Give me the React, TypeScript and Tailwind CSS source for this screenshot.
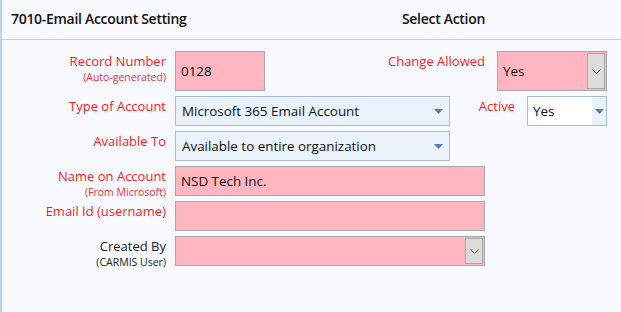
import React from "react";

const font = { fontFamily: '"Open Sans", "Noto Sans", sans-serif' };

const Label: React.FC<{ text: string; sub?: string; red?: boolean }> = ({ text, sub, red = true }) => (
  <div className={`w-[165px] shrink-0 pt-[1px] pr-[1px] text-right ${red ? "text-[#ff1a1a]" : "text-[#222]"}`}>
    <div className="text-[13px] leading-[19px]">{text}</div>
    {sub && (
      <div className={`text-[10.5px] leading-[14px] -mt-[1px] ${red ? "text-[#f0303a]" : "text-[#222]"}`}>{sub}</div>
    )}
  </div>
);

const Caret = () => (
  <svg width="9" height="5" viewBox="0 0 9 5" className="shrink-0">
    <path d="M0 0h9L4.5 5z" fill="#5a7bb0" />
  </svg>
);

const Chevron = () => (
  <svg width="9" height="5" viewBox="0 0 9 5">
    <path d="M0.5 0.5L4.5 4.5L8.5 0.5" fill="none" stroke="#555" strokeWidth="1" />
  </svg>
);

const BlueSelect: React.FC<{ value: string; w: string }> = ({ value, w }) => (
  <div className={`${w} h-[30px] flex items-center justify-between pl-[6px] pr-[6px] bg-[#e9f1fb] border border-[#a7bcd9] text-[13.4px] text-[#111]`}>
    <span>{value}</span>
    <Caret />
  </div>
);

const PinkBox: React.FC<{ value?: string; w: string; h?: string; dropdown?: boolean }> = ({ value, w, h = "h-[30px]", dropdown }) => (
  <div className={`${w} ${h} flex items-center justify-between pl-[5px] pr-[1px] bg-[#ffb6c1] border border-[#a8a8a8] text-[13.4px] text-[#111]`}>
    <span>{value}</span>
    {dropdown && (
      <div className="w-[18px] self-stretch my-[1px] flex items-center justify-center bg-[#dcdcdc] border border-[#a8a8a8]">
        <Chevron />
      </div>
    )}
  </div>
);

export default function App() {
  return (
    <div className="w-[621px] h-[312px] bg-[#f7f9fe] border-l-2 border-[#bcd3ee] overflow-hidden" style={font}>
      <div className="h-[40px] flex items-center justify-between pl-[9px] pr-[136px] border-b border-[#c8d0dd]">
        <div className="text-[14px] tracking-[-0.3px] font-semibold text-[#111] -mt-[3px]">7010-Email Account Setting</div>
        <div className="text-[14px] tracking-[-0.3px] font-semibold text-[#111] -mt-[3px]">Select Action</div>
      </div>

      <div className="flex flex-col gap-[5px] pt-[11px] pr-[14px]">
        <div className="flex h-[40px]">
          <Label text="Record Number" sub="(Auto-generated)" />
          <div className="ml-[8px]">
            <PinkBox value="0128" w="w-[90px]" h="h-[40px]" />
          </div>
          <div className="flex-1 text-right pt-[1px] pr-[12px] text-[13px] leading-[19px] text-[#ff1a1a]">Change Allowed</div>
          <PinkBox value="Yes" w="w-[110px]" h="h-[40px]" dropdown />
        </div>

        <div className="flex h-[30px]">
          <Label text="Type of Account" />
          <div className="ml-[8px]">
            <BlueSelect value="Microsoft 365 Email Account" w="w-[275px]" />
          </div>
          <div className="flex-1 text-right pt-[1px] pr-[12px] text-[13px] leading-[19px] text-[#ff1a1a]">Active</div>
          <div className="w-[80px] h-[30px] flex items-stretch bg-white border border-[#a7bcd9] text-[13.4px] text-[#111]">
            <span className="flex-1 flex items-center pl-[5px]">Yes</span>
            <span className="w-[14px] flex items-center justify-center bg-[#e9f1fb]">
              <Caret />
            </span>
          </div>
        </div>

        <div className="flex h-[30px]">
          <Label text="Available To" />
          <div className="ml-[8px]">
            <BlueSelect value="Available to entire organization" w="w-[275px]" />
          </div>
        </div>

        <div className="flex h-[30px]">
          <Label text="Name on Account" sub="(From Microsoft)" />
          <div className="ml-[8px]">
            <PinkBox value="NSD Tech Inc." w="w-[310px]" />
          </div>
        </div>

        <div className="flex h-[30px]">
          <Label text="Email Id (username)" />
          <div className="ml-[8px]">
            <PinkBox w="w-[310px]" />
          </div>
        </div>

        <div className="flex h-[30px]">
          <Label text="Created By" sub="(CARMIS User)" red={false} />
          <div className="ml-[8px]">
            <PinkBox w="w-[310px]" dropdown />
          </div>
        </div>
      </div>
    </div>
  );
}
